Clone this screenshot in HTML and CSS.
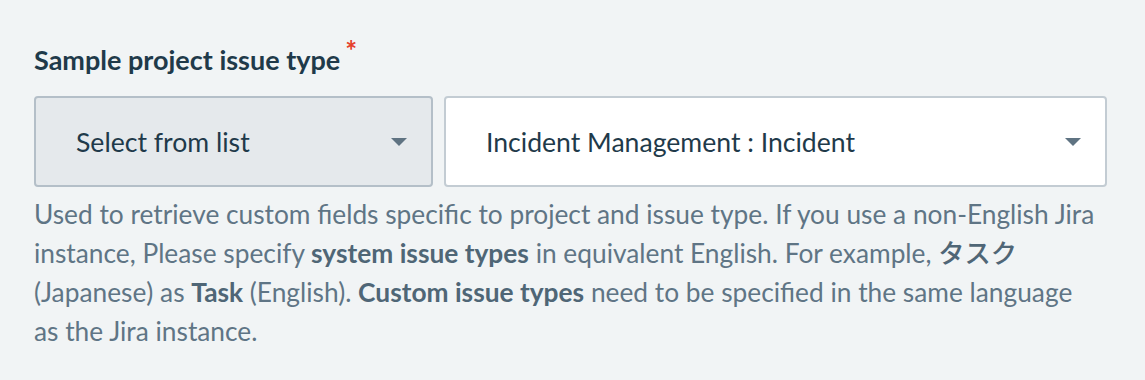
FILE: index.html
```html
<!DOCTYPE html>
<html lang="en">
<head>
    <meta charset="UTF-8">
    <meta name="viewport" content="width=device-width, initial-scale=1.0">
    <title>Sample project issue type</title>
    <link rel="stylesheet" href="styles.css">
</head>
<body>
    <div class="field">
        <label class="field-label">Sample project issue type<span class="required">*</span></label>
        <div class="select-row">
            <div class="select mode">
                <span class="select-value">Select from list</span>
                <span class="caret"></span>
            </div>
            <div class="select value">
                <span class="select-value">Incident Management : Incident</span>
                <span class="caret"></span>
            </div>
        </div>
        <p class="help">
            Used to retrieve custom fields specific to project and issue type. If you use a non-English Jira<br>
            instance, Please specify <b>system issue types</b> in equivalent English. For example, <b class="jp">タスク</b><br>
            (Japanese) as <b>Task</b> (English). <b>Custom issue types</b> need to be specified in the same language<br>
            as the Jira instance.
        </p>
    </div>
</body>
</html>
```

FILE: styles.css
```css
body {
    font-family: "Lato", "Noto Sans CJK JP", sans-serif;
    background-color: #f1f4f5;
    margin: 0;
    padding: 0;
}
.field {
    width: 1073px;
    padding: 39px 0 0 34px;
}
.field-label {
    display: block;
    font-size: 27px;
    line-height: 42px;
    font-weight: 700;
    color: #1f3a4a;
    margin-bottom: 15px;
}
.required {
    color: #e5402a;
    font-size: 28px;
    font-weight: 700;
    vertical-align: top;
    margin-left: 5px;
    line-height: 22px;
}
.select-row {
    display: flex;
    gap: 11px;
}
.select {
    height: 91px;
    box-sizing: border-box;
    display: flex;
    align-items: center;
    justify-content: space-between;
    padding: 0 24px 0 40px;
    border: 2px solid #c3ccd3;
    border-radius: 4px;
}
.select.mode {
    width: 399px;
    background-color: #e5e9ec;
    border-color: #b4bfc8;
}
.select.value {
    flex: 1;
    background-color: #fff;
}
.select-value {
    font-size: 26.6px;
    color: #1f3a4a;
}
.caret {
    width: 0;
    height: 0;
    border-left: 8px solid transparent;
    border-right: 8px solid transparent;
    border-top: 8px solid #5f7382;
}
.help {
    margin: 8px 0 0;
    font-size: 26.3px;
    line-height: 39px;
    color: #5f7585;
    white-space: nowrap;
}
.help b {
    font-weight: 700;
    color: #4f6676;
}
.help .jp {
    font-weight: 500;
}
```
